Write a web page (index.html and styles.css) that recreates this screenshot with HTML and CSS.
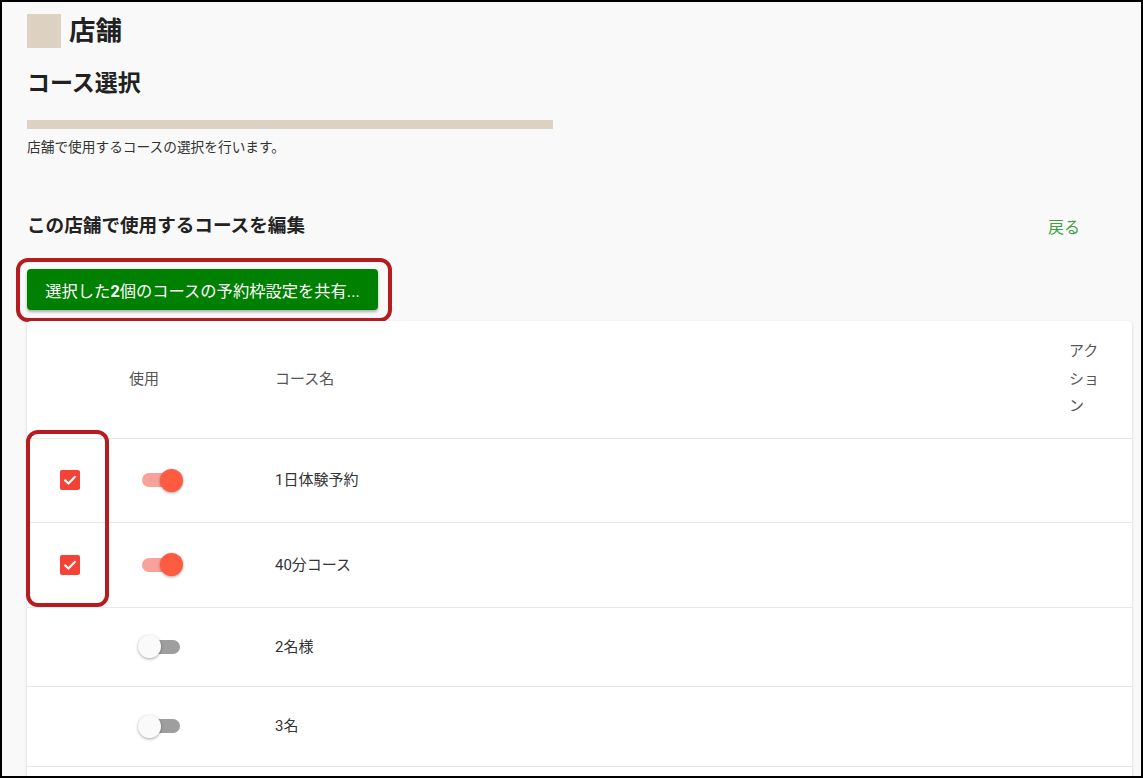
FILE: index.html
```html
<!DOCTYPE html>
<html lang="ja">
<head>
<meta charset="utf-8">
<title>店舗 - コース選択</title>
<link rel="stylesheet" href="styles.css">
</head>
<body>
<div class="frame">
  <main class="page">
    <header class="page-title">
      <span class="title-mark"></span>
      <h1>店舗</h1>
    </header>
    <h2 class="sub">コース選択</h2>
    <div class="accent-bar"></div>
    <p class="desc">店舗で使用するコースの選択を行います。</p>

    <div class="section-head">
      <h3>この店舗で使用するコースを編集</h3>
      <a class="back" href="#">戻る</a>
    </div>

    <div class="action-bar">
      <div class="highlight-wrap">
        <button class="share-btn" type="button">選択した<b>2</b>個のコースの予約枠設定を共有...</button>
        <span class="annot annot-btn"></span>
      </div>
    </div>

    <section class="card">
      <div class="row head">
        <div class="cell"></div>
        <div class="cell">使用</div>
        <div class="cell">コース名</div>
        <div class="cell action-head"><span>アクション</span></div>
      </div>

      <div class="row">
        <div class="cell check-cell"><span class="ripple"><span class="checkbox"><svg viewBox="0 0 20 20" width="20" height="20"><path d="M5.2 10.4l3.2 3.1 6.4-6.6" fill="none" stroke="#fff" stroke-width="2.2" stroke-linecap="round" stroke-linejoin="round"/></svg></span></span></div>
        <div class="cell"><span class="switch on"><span class="track"></span><span class="thumb"></span></span></div>
        <div class="cell name">1日体験予約</div>
        <div class="cell"></div>
      </div>

      <div class="row">
        <div class="cell check-cell"><span class="ripple"><span class="checkbox"><svg viewBox="0 0 20 20" width="20" height="20"><path d="M5.2 10.4l3.2 3.1 6.4-6.6" fill="none" stroke="#fff" stroke-width="2.2" stroke-linecap="round" stroke-linejoin="round"/></svg></span></span></div>
        <div class="cell"><span class="switch on"><span class="track"></span><span class="thumb"></span></span></div>
        <div class="cell name">40分コース</div>
        <div class="cell"></div>
      </div>

      <div class="row">
        <div class="cell check-cell"></div>
        <div class="cell"><span class="switch"><span class="track"></span><span class="thumb"></span></span></div>
        <div class="cell name">2名様</div>
        <div class="cell"></div>
      </div>

      <div class="row">
        <div class="cell check-cell"></div>
        <div class="cell"><span class="switch"><span class="track"></span><span class="thumb"></span></span></div>
        <div class="cell name">3名</div>
        <div class="cell"></div>
      </div>

      <span class="annot annot-checks"></span>
    </section>
  </main>
</div>
</body>
</html>
```

FILE: styles.css
```css
html, body {
  margin: 0;
  padding: 0;
  background: #000;
}

.frame {
  width: 1143px;
  height: 778px;
  box-sizing: border-box;
  border: 2px solid #000;
  background: #f9f9f9;
  overflow: hidden;
  font-family: Roboto, "Noto Sans CJK JP", sans-serif;
  color: #222;
}

.page {
  padding: 12px 9px 0 25px;
}

.page-title {
  display: flex;
  align-items: center;
  gap: 8px;
  height: 34px;
}

.title-mark {
  width: 34px;
  height: 34px;
  background: #ddd1c1;
  flex: none;
}

.page-title h1 {
  margin: 0;
  font-size: 26.5px;
  line-height: 34px;
  font-weight: 700;
  color: #212121;
}

.sub {
  margin: 21px 0 0;
  font-size: 23px;
  line-height: 30px;
  font-weight: 700;
  color: #212121;
}

.accent-bar {
  margin-top: 21px;
  width: 526px;
  height: 9px;
  background: #ddd1c1;
}

.desc {
  margin: 8px 0 0;
  font-size: 13.7px;
  line-height: 20px;
  color: #333;
}

.section-head {
  margin-top: 56px;
  display: flex;
  justify-content: space-between;
  align-items: center;
  height: 26px;
}

.section-head h3 {
  margin: 0;
  font-size: 18.6px;
  line-height: 26px;
  font-weight: 700;
  color: #222;
}

.back {
  margin-right: 52px;
  font-size: 16px;
  color: #43a047;
  text-decoration: none;
}

.action-bar {
  margin-top: 30px;
  display: flex;
}

.highlight-wrap {
  position: relative;
  display: flex;
}

.share-btn {
  width: 351px;
  height: 41px;
  padding: 0;
  border: none;
  border-radius: 4px;
  background: #008000;
  color: #fff;
  font-family: Roboto, "Noto Sans CJK JP", sans-serif;
  font-size: 16.3px;
  font-weight: 400;
  box-shadow: 0 2px 3px rgba(0, 0, 0, 0.3);
  cursor: pointer;
}

.share-btn b {
  font-weight: 700;
}

.annot {
  position: absolute;
  box-sizing: border-box;
  border: 4px solid #b41c1f;
  border-radius: 12px;
  pointer-events: none;
}

.annot-btn {
  left: -11px;
  top: -11px;
  width: 376px;
  height: 64px;
}

.card {
  position: relative;
  margin-top: 11px;
  padding-bottom: 60px;
  background: #fff;
  border-radius: 4px;
  box-shadow: 0 1px 3px rgba(0, 0, 0, 0.18);
}

.row {
  display: grid;
  grid-template-columns: 86px 146px 1fr 79px;
  align-items: center;
  border-bottom: 1px solid #e8e8e8;
}

.cell {
  padding: 21.75px 0 21.75px 16px;
  font-size: 15px;
  color: #333;
}

.head .cell {
  padding: 17px 0 17px 16px;
  line-height: 27.5px;
  color: #555;
}

.action-head span {
  display: block;
  width: 34px;
}

.check-cell {
  padding-left: 0;
  display: flex;
  justify-content: center;
}

.ripple {
  width: 40px;
  height: 40px;
  display: flex;
  align-items: center;
  justify-content: center;
}

.checkbox {
  width: 20px;
  height: 20px;
  border-radius: 2px;
  background: #f44336;
  display: flex;
}

.switch {
  position: relative;
  display: block;
  width: 46px;
  height: 35px;
  margin-left: 9px;
}

.switch .track {
  position: absolute;
  left: 4px;
  top: 10.5px;
  width: 38px;
  height: 14px;
  border-radius: 7px;
  background: #9e9e9e;
}

.switch .thumb {
  position: absolute;
  left: 0;
  top: 6px;
  width: 23px;
  height: 23px;
  border-radius: 50%;
  background: #fafafa;
  box-shadow: 0 1px 3px rgba(0, 0, 0, 0.35);
}

.switch.on .track {
  background: #f9a29b;
}

.switch.on .thumb {
  left: 22px;
  background: #ff5b40;
}

.name {
  line-height: 20px;
}

.annot-checks {
  left: -1px;
  top: 109px;
  width: 83px;
  height: 177px;
}
```
